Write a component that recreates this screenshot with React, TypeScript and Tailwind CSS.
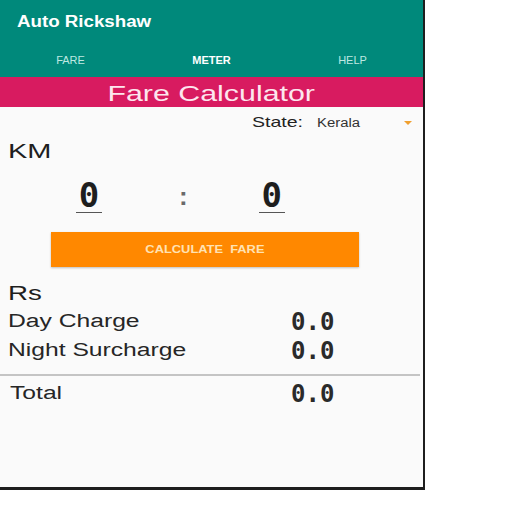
import React from "react";

const sans = { fontFamily: "'Liberation Sans', Arial, sans-serif" };
const seg = { fontFamily: "'DejaVu Sans Mono', 'Liberation Mono', monospace" };

// the captured screen is stretched sideways, so the body text is widened a bit
const Wide = ({ children, className }: { children: React.ReactNode; className?: string }) => (
  <span className={`inline-block origin-left ${className ?? ""}`}>{children}</span>
);

const Row = ({ label, value, className }: { label: string; value: string; className?: string }) => (
  <div className={`flex items-center h-[29px] ${className ?? ""}`}>
    <div className="w-[283px] text-[18px] text-[#262626]">
      <Wide className="scale-x-[1.37]">{label}</Wide>
    </div>
    <span className="text-[24px] font-bold text-[#2a2a2a] leading-none" style={seg}>
      {value}
    </span>
  </div>
);

const Digit = () => (
  <div className="w-[26px] flex flex-col items-center">
    <span className="text-[34px] font-bold text-[#1e1e1e] leading-[33px]" style={seg}>0</span>
    <span className="w-full h-[1px] bg-[#555]" />
  </div>
);

export default function App() {
  return (
    <div className="w-[512px] h-[512px] bg-white" style={sans}>
      <div className="w-[425px] h-[490px] flex flex-col bg-[#fafafa] border-r-2 border-b-[3px] border-[#1e1e1e]">
        <div className="bg-[#00897b] h-[77px] flex flex-col">
          <div className="h-[44px] flex items-center pl-[17px] text-white text-[16px] font-bold">
            <Wide className="scale-x-[1.17]">Auto Rickshaw</Wide>
          </div>
          <div className="grid grid-cols-3 h-[33px] items-center text-[11px]">
            <div className="text-center text-[#bfe8e2]">FARE</div>
            <div className="text-center text-white font-bold">METER</div>
            <div className="text-center text-[#bfe8e2]">HELP</div>
          </div>
        </div>
        <div className="bg-[#d81b60] h-[30px] flex items-center justify-center text-[22px] text-[#fde6ee] leading-none pt-[3px]">
          <span className="inline-block scale-x-[1.38]">Fare Calculator</span>
        </div>
        <div className="flex items-center h-[30px] pt-[1px]">
          <div className="ml-[252px] w-[65px] text-[15px] text-[#222]">
            <Wide className="scale-x-[1.3]">State:</Wide>
          </div>
          <div className="text-[12px] text-[#333]">
            <Wide className="scale-x-[1.24]">Kerala</Wide>
          </div>
          <span className="ml-auto mr-[11px] w-0 h-0 border-l-[4px] border-r-[4px] border-t-[4px] border-l-transparent border-r-transparent border-t-[#f0a030]" />
        </div>
        <div className="pl-[8px] text-[21px] text-[#1e1e1e] h-[28px] leading-[28px]">
          <Wide className="scale-x-[1.38]">KM</Wide>
        </div>
        <div className="flex items-start pt-[14px]">
          <div className="ml-[76px]">
            <Digit />
          </div>
          <span className="ml-[77px] mt-[3px] text-[26px] font-bold text-[#6a6a6a] leading-[28px]">:</span>
          <div className="ml-[71px]">
            <Digit />
          </div>
        </div>
        <div className="mt-[19px] ml-[51px] w-[308px] h-[35px] bg-[#ff8800] shadow-[0_1px_2px_rgba(0,0,0,0.25)] flex items-center justify-center text-[11px] font-bold text-[#ffe2b3]">
          <span className="inline-block scale-x-[1.17]">CALCULATE&nbsp; FARE</span>
        </div>
        <div className="pl-[8px] mt-[12px] text-[21px] text-[#1e1e1e] h-[28px] leading-[28px]">
          <Wide className="scale-x-[1.32]">Rs</Wide>
        </div>
        <Row label="Day Charge" value="0.0" className="pl-[8px]" />
        <Row label="Night Surcharge" value="0.0" className="pl-[8px]" />
        <div className="mt-[9px] mr-[3px] h-[2px] bg-[#c4c4c4]" />
        <Row label="Total" value="0.0" className="pl-[10px] mt-[3px] [&>div:first-child]:w-[281px]" />
      </div>
    </div>
  );
}
